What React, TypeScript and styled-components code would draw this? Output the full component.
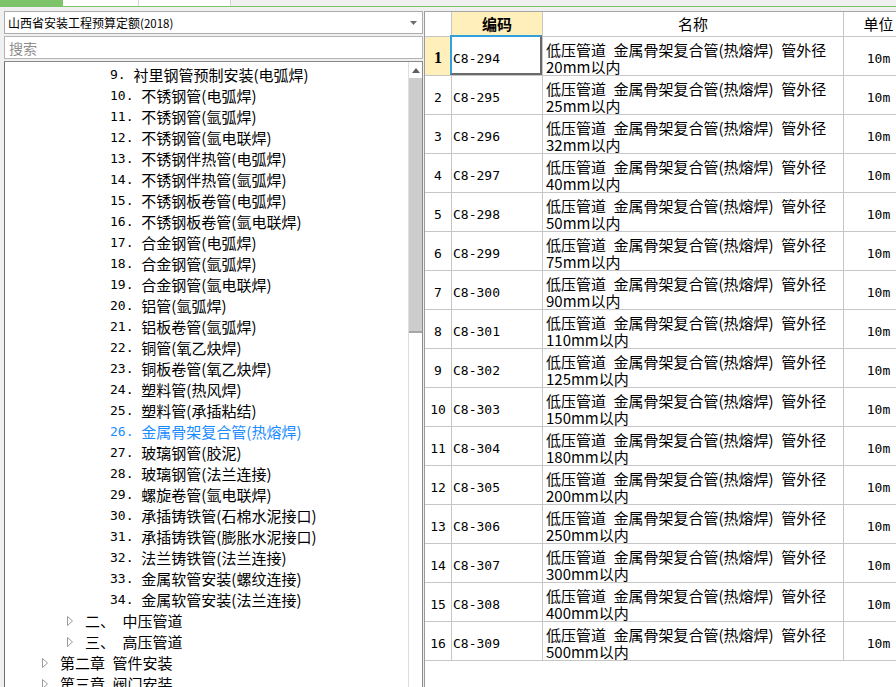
import React from 'react'
import styled, { createGlobalStyle } from 'styled-components'

const GlobalStyle = createGlobalStyle`
  html, body, #root {
    margin: 0;
    padding: 0;
    height: 100%;
  }
  body {
    background: #f0f0f0;
    overflow: hidden;
    font-family: "Noto Sans CJK SC", "Liberation Sans", sans-serif;
    color: #000;
  }
  * {
    box-sizing: border-box;
  }
`

const green = '#7cc36a'
const monoFont = `"DejaVu Sans Mono", "Liberation Mono", monospace`

const leafItems = [
  '衬里钢管预制安装(电弧焊)',
  '不锈钢管(电弧焊)',
  '不锈钢管(氩弧焊)',
  '不锈钢管(氩电联焊)',
  '不锈钢伴热管(电弧焊)',
  '不锈钢伴热管(氩弧焊)',
  '不锈钢板卷管(电弧焊)',
  '不锈钢板卷管(氩电联焊)',
  '合金钢管(电弧焊)',
  '合金钢管(氩弧焊)',
  '合金钢管(氩电联焊)',
  '铝管(氩弧焊)',
  '铝板卷管(氩弧焊)',
  '铜管(氧乙炔焊)',
  '铜板卷管(氧乙炔焊)',
  '塑料管(热风焊)',
  '塑料管(承插粘结)',
  '金属骨架复合管(热熔焊)',
  '玻璃钢管(胶泥)',
  '玻璃钢管(法兰连接)',
  '螺旋卷管(氩电联焊)',
  '承插铸铁管(石棉水泥接口)',
  '承插铸铁管(膨胀水泥接口)',
  '法兰铸铁管(法兰连接)',
  '金属软管安装(螺纹连接)',
  '金属软管安装(法兰连接)',
]

type TreeNode = { level: number; num?: string; label: string; folder?: boolean; active?: boolean }

const treeNodes: TreeNode[] = [
  ...leafItems.map((label, i) => ({
    level: 2,
    num: `${i + 9}. `,
    label,
    active: i + 9 === 26,
  })),
  { level: 1, label: '二、\u2002中压管道', folder: true },
  { level: 1, label: '三、\u2002高压管道', folder: true },
  { level: 0, label: '第二章\u2002管件安装', folder: true },
  { level: 0, label: '第三章\u2002阀门安装', folder: true },
]

const sizes = [20, 25, 32, 40, 50, 75, 90, 110, 125, 150, 180, 200, 250, 300, 400, 500]
const quotaRows = sizes.map((size, i) => ({
  no: i + 1,
  code: `C8-${294 + i}`,
  size,
}))

export default function App() {
  return (
    <Page>
      <GlobalStyle />
      <TabStrip>
        <Tab $w={63} $active />
        <Tab $w={76} />
        <Tab $w={92} />
      </TabStrip>
      <Main>
        <LeftPanel>
          <Select>
            <SelectText>
              山西省安装工程预算定额<small>(2018)</small>
            </SelectText>
            <svg width="7" height="4" viewBox="0 0 7 4">
              <polygon points="0,0 7,0 3.5,4" fill="#6e6e6e" />
            </svg>
          </Select>
          <Search placeholder="搜索" />
          <TreeBox>
            <TreeList>
              {treeNodes.map((node, i) => (
                <TreeRow key={i} $level={node.level} $active={node.active}>
                  <Toggle>
                    {node.folder && (
                      <svg width="6" height="10" viewBox="0 0 6 10">
                        <polygon points="0.5,0.5 5.5,5 0.5,9.5" fill="#fff" stroke="#9a9a9a" />
                      </svg>
                    )}
                  </Toggle>
                  {node.num && <Num>{node.num}</Num>}
                  <span>{node.label}</span>
                </TreeRow>
              ))}
            </TreeList>
            <ScrollBar>
              <ScrollUp>
                <svg width="8" height="5" viewBox="0 0 8 5">
                  <polygon points="0,5 8,5 4,0" fill="#5f5f5f" />
                </svg>
              </ScrollUp>
              <Thumb />
              <Track />
            </ScrollBar>
          </TreeBox>
        </LeftPanel>

        <RightPanel>
          <Grid>
            <HeadCell />
            <HeadCell $selected $bold>编码</HeadCell>
            <HeadCell>名称</HeadCell>
            <HeadCell>单位</HeadCell>
            {quotaRows.map(row => (
              <React.Fragment key={row.no}>
                <NoCell $selected={row.no === 1}>{row.no}</NoCell>
                <CodeCell $focused={row.no === 1}>{row.code}</CodeCell>
                <NameCell>
                  <NameLine>低压管道{'\u2002'}金属骨架复合管(热熔焊){'\u2002'}管外径</NameLine>
                  <NameLine>{row.size}mm以内</NameLine>
                </NameCell>
                <UnitCell>10m</UnitCell>
              </React.Fragment>
            ))}
          </Grid>
        </RightPanel>
      </Main>
    </Page>
  )
}

const Page = styled.div`
  height: 100%;
  display: flex;
  flex-direction: column;
`

const TabStrip = styled.div`
  display: flex;
  height: 7px;
  flex-shrink: 0;
  border-bottom: 1px solid ${green};
`

const Tab = styled.div<{ $w: number; $active?: boolean }>`
  width: ${p => p.$w}px;
  background: ${p => (p.$active ? green : '#fff')};
  border-right: 1px solid ${p => (p.$active ? green : '#d6d6d6')};
`

const Main = styled.div`
  flex: 1;
  min-height: 0;
  display: flex;
`

const LeftPanel = styled.section`
  width: 424px;
  flex-shrink: 0;
  padding: 4px 1px 0 4px;
  display: flex;
  flex-direction: column;
  gap: 2px;
`

const Select = styled.div`
  height: 23px;
  flex-shrink: 0;
  background: #fff;
  border: 1px solid #acacac;
  display: flex;
  align-items: center;
  justify-content: space-between;
  padding: 0 5px 0 3px;
`

const SelectText = styled.span`
  font-size: 12px;
  line-height: 16px;
  small {
    font-size: 11.5px;
  }
`

const Search = styled.input`
  height: 23px;
  flex-shrink: 0;
  background: #fff;
  border: 1px solid #b4b4b4;
  outline: none;
  padding: 0 4px;
  font-family: "Noto Sans CJK SC", sans-serif;
  font-size: 14px;
  &::placeholder {
    color: #8e8e8e;
  }
`

const TreeBox = styled.div`
  flex: 1;
  min-height: 0;
  display: flex;
  background: #fff;
  border: 1px solid #8a8a8a;
  border-left-color: #6f6f6f;
  border-bottom: none;
`

const TreeList = styled.div`
  flex: 1;
  padding-top: 2px;
  overflow: hidden;
`

const TreeRow = styled.div<{ $level: number; $active?: boolean }>`
  height: 21px;
  display: flex;
  align-items: center;
  padding-left: ${p => 37 + p.$level * 25}px;
  font-size: 15px;
  line-height: 21px;
  white-space: pre;
  color: ${p => (p.$active ? '#1a8cff' : '#000')};
`

const Toggle = styled.span`
  width: 18px;
  flex-shrink: 0;
  display: flex;
  align-items: center;
`

const Num = styled.span`
  font-family: ${monoFont};
  font-size: 13px;
`

const ScrollBar = styled.div`
  width: 14px;
  flex-shrink: 0;
  display: flex;
  flex-direction: column;
  border-left: 1px solid #dedede;
`

const ScrollUp = styled.div`
  height: 16px;
  display: flex;
  align-items: center;
  justify-content: center;
`

const Thumb = styled.div`
  height: 255px;
  background: #cdcdcd;
  border-bottom: 2px solid #a6a6a6;
`

const Track = styled.div`
  flex: 1;
  background: #fff;
`

const RightPanel = styled.section`
  flex: 1;
  min-width: 0;
  margin-top: 4px;
  background: #fff;
  border-left: 1px solid #9a9a9a;
  border-top: 1px solid #a6a6a6;
  overflow: hidden;
`

const Grid = styled.div`
  display: grid;
  grid-template-columns: 27px 91px 301px 70px;
  grid-template-rows: 25px;
  grid-auto-rows: 39px;
  width: 489px;
`

const Cell = styled.div`
  position: relative;
  border-right: 1px solid #c6c6c6;
  border-bottom: 1px solid #c6c6c6;
  font-size: 15px;
  display: flex;
  align-items: center;
  white-space: nowrap;
`

const HeadCell = styled(Cell)<{ $selected?: boolean; $bold?: boolean }>`
  justify-content: center;
  background: ${p => (p.$selected ? '#ffefbb' : '#fff')};
  font-weight: ${p => (p.$bold ? 700 : 400)};
  line-height: 20px;
`

const NoCell = styled(Cell)<{ $selected?: boolean }>`
  justify-content: center;
  padding-top: 4px;
  background: ${p => (p.$selected ? '#ffefbb' : '#fff')};
  font-family: ${p => (p.$selected ? `"Liberation Serif", serif` : monoFont)};
  font-size: ${p => (p.$selected ? '16px' : '13px')};
  font-weight: ${p => (p.$selected ? 700 : 400)};
`

const CodeCell = styled(Cell)<{ $focused?: boolean }>`
  padding: 4px 0 0 1px;
  font-family: ${monoFont};
  font-size: 13px;
  ${p =>
    p.$focused &&
    `
    &::after {
      content: '';
      position: absolute;
      top: -2px;
      left: -2px;
      right: 0;
      bottom: 0;
      border: 2px solid #6a6a6a;
      border-top-color: #32a0dc;
      border-left-color: #32a0dc;
    }
  `}
`

const NameCell = styled(Cell)`
  flex-direction: column;
  align-items: flex-start;
  justify-content: center;
  padding: 3px 0 0 3px;
`

const NameLine = styled.div`
  height: 17px;
  line-height: 17px;
`

const UnitCell = styled(Cell)`
  justify-content: center;
  padding-top: 4px;
  font-family: ${monoFont};
  font-size: 13px;
`
